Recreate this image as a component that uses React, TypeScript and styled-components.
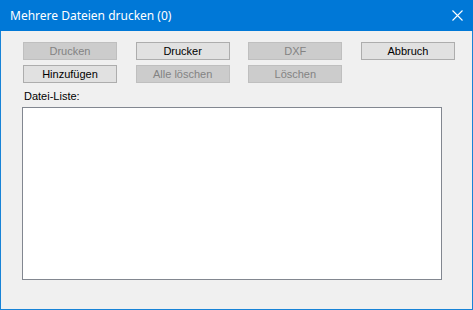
import React from "react";
import styled, { createGlobalStyle } from "styled-components";

const GlobalStyle = createGlobalStyle`
  html, body {
    margin: 0;
    padding: 0;
    background: #f0f0f0;
  }
`;

const buttons = [
  [
    { label: "Drucken", disabled: true },
    { label: "Drucker", disabled: false },
    { label: "DXF", disabled: true },
    { label: "Abbruch", disabled: false },
  ],
  [
    { label: "Hinzufügen", disabled: false },
    { label: "Alle löschen", disabled: true },
    { label: "Löschen", disabled: true },
  ],
];

const App: React.FC = () => {
  return (
    <>
      <GlobalStyle />
      <Window>
        <TitleBar>
          <Title>Mehrere Dateien drucken (0)</Title>
          <CloseIcon width="11" height="11" viewBox="0 0 11 11">
            <path d="M0.5 0.5 L10.5 10.5 M10.5 0.5 L0.5 10.5" stroke="#fff" strokeWidth="1.1" />
          </CloseIcon>
        </TitleBar>
        <Body>
          <ButtonGrid>
            {buttons.flat().map((b) => (
              <Button key={b.label} $disabled={b.disabled}>
                {b.label}
              </Button>
            ))}
          </ButtonGrid>
          <Label>Datei-Liste:</Label>
          <ListBox />
        </Body>
      </Window>
    </>
  );
};

export default App;

const Window = styled.div`
  width: 473px;
  height: 310px;
  box-sizing: border-box;
  border: 1px solid #1883d7;
  border-top: none;
  display: flex;
  flex-direction: column;
  background: #f0f0f0;
`;

const TitleBar = styled.div`
  height: 31px;
  flex-shrink: 0;
  background-color: #0078d7;
  margin: 0 -1px;
  display: flex;
  align-items: center;
  justify-content: space-between;
  padding-left: 10px;
  padding-right: 10px;
`;

const Title = styled.span`
  font-family: "Noto Sans", "Open Sans", sans-serif;
  font-size: 12px;
  color: #fff;
  margin-top: -1px;
`;

const CloseIcon = styled.svg`
  display: block;
  margin-top: -1px;
`;

const Body = styled.div`
  flex: 1;
  display: flex;
  flex-direction: column;
  padding: 11px 31px 0 21px;
`;

const ButtonGrid = styled.div`
  display: grid;
  grid-template-columns: repeat(4, 94px);
  column-gap: 18.67px;
  row-gap: 5px;
  margin-left: 1px;
`;

const Button = styled.div<{ $disabled: boolean }>`
  height: 18px;
  box-sizing: border-box;
  border: 1px solid ${(p) => (p.$disabled ? "#bfbfbf" : "#adadad")};
  background-color: ${(p) => (p.$disabled ? "#cccccc" : "#e1e1e1")};
  color: ${(p) => (p.$disabled ? "#838383" : "#000")};
  font-family: "Liberation Sans", Arial, sans-serif;
  font-size: 11px;
  display: flex;
  align-items: center;
  justify-content: center;
`;

const Label = styled.div`
  font-family: "Liberation Sans", Arial, sans-serif;
  font-size: 11px;
  color: #000;
  margin-top: 6px;
  margin-left: 2px;
  height: 18px;
  line-height: 14px;
`;

const ListBox = styled.div`
  width: 420px;
  height: 173px;
  box-sizing: border-box;
  border: 1px solid #828790;
  background: #fff;
`;
